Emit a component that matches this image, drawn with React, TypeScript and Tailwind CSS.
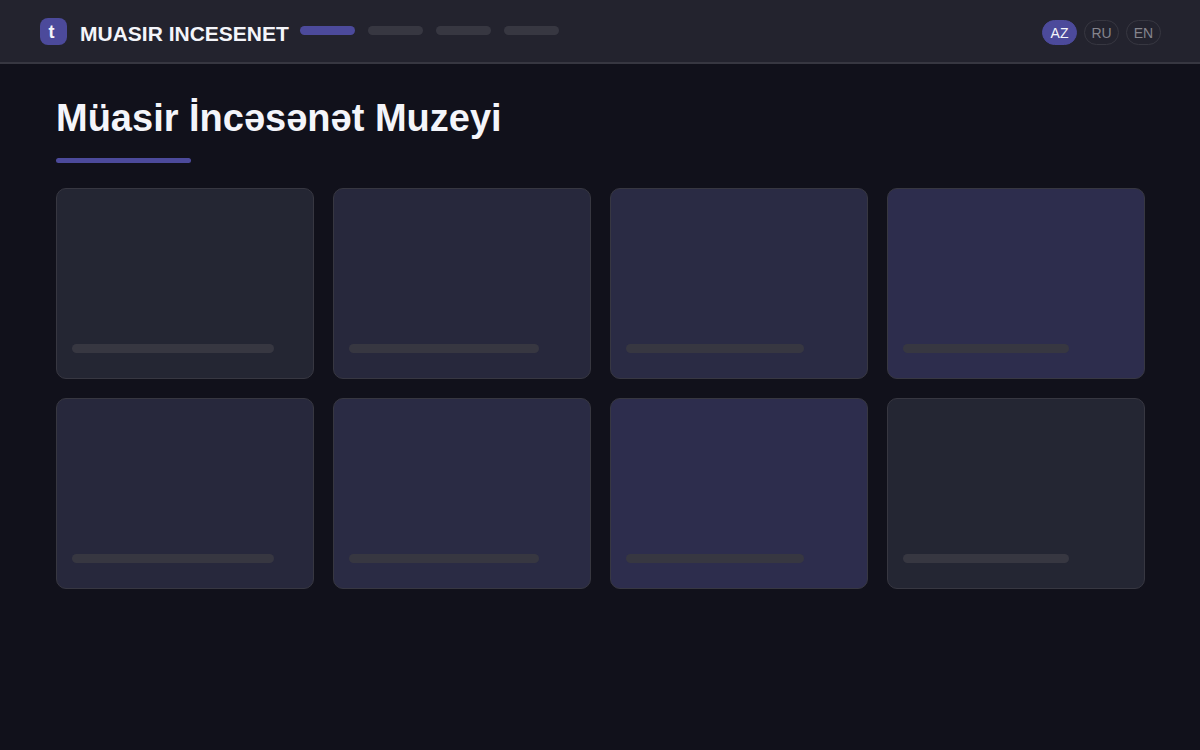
import React, { useState } from 'react';

interface Card {
  id: number;
  title: string;
  bg: string;
  bar: string;
}

const NAV_ITEMS = ['Ana səhifə', 'Sərgilər', 'Kolleksiya', 'Əlaqə'];

const LANGS = ['AZ', 'RU', 'EN'];

const CARDS: Card[] = [
  { id: 1, title: 'Zal 1', bg: 'bg-[#242633]', bar: 'w-[202px]' },
  { id: 2, title: 'Zal 2', bg: 'bg-[#27283c]', bar: 'w-[190px]' },
  { id: 3, title: 'Zal 3', bg: 'bg-[#2a2b44]', bar: 'w-[178px]' },
  { id: 4, title: 'Zal 4', bg: 'bg-[#2d2d4d]', bar: 'w-[166px]' },
  { id: 5, title: 'Zal 5', bg: 'bg-[#27283c]', bar: 'w-[202px]' },
  { id: 6, title: 'Zal 6', bg: 'bg-[#2a2b44]', bar: 'w-[190px]' },
  { id: 7, title: 'Zal 7', bg: 'bg-[#2d2d4d]', bar: 'w-[178px]' },
  { id: 8, title: 'Zal 8', bg: 'bg-[#242633]', bar: 'w-[166px]' },
];

const Header: React.FC = () => {
  const [active, setActive] = useState(0);
  const [lang, setLang] = useState('AZ');

  return (
    <header className="flex items-center h-16 pl-10 pr-[39px] bg-[#23232e] border-b-2 border-[#373741]">
      <div className="flex items-center gap-[13px]">
        <div className="flex items-center justify-center w-[27px] h-[27px] pt-0.5 pr-1 rounded-lg bg-[#4c4a9b] text-lg leading-5 font-bold">
          t
        </div>
        <span className="pt-1.5 text-[21px] leading-6 font-bold whitespace-nowrap">MUASIR INCESENET</span>
      </div>
      <nav className="flex gap-[13px] ml-[11px] pb-0.5">
        {NAV_ITEMS.map((item, i) => (
          <button
            key={item}
            aria-label={item}
            onClick={() => setActive(i)}
            className={`w-[55px] h-[9px] rounded-full ${active === i ? 'bg-[#4c4a9b]' : 'bg-[#373741]'}`}
          />
        ))}
      </nav>
      <div className="flex gap-[7px] ml-auto pt-[3px]">
        {LANGS.map(code => (
          <button
            key={code}
            onClick={() => setLang(code)}
            className={`w-[35px] h-[25px] rounded-full border text-sm leading-5 ${lang === code ? 'bg-[#4c4a9b] border-[#4c4a9b] text-[#f4f5fa]' : 'border-[#373741] text-[#85858d]'}`}
          >
            {code}
          </button>
        ))}
      </div>
    </header>
  );
};

export default function App() {
  return (
    <div className="min-h-screen bg-[#11111b] text-[#f4f5fa] font-['Liberation_Sans',Arial,sans-serif]">
      <Header />
      <main className="pl-14 pr-[55px] pt-8 pb-10">
        <h1 className="text-[38px] leading-[44px] font-bold">Müasir İncəsənət Muzeyi</h1>
        <div className="w-[135px] h-[5px] mt-[18px] rounded-sm bg-[#4c4a9b]" />
        <div className="grid grid-cols-4 gap-[19px] mt-[25px]">
          {CARDS.map(card => (
            <article
              key={card.id}
              aria-label={card.title}
              className={`flex items-end h-[191px] px-[15px] pb-[25px] rounded-[10px] border border-[#373741] ${card.bg}`}
            >
              <div className={`h-[9px] rounded-full bg-[#373741] ${card.bar}`} />
            </article>
          ))}
        </div>
      </main>
    </div>
  );
}
